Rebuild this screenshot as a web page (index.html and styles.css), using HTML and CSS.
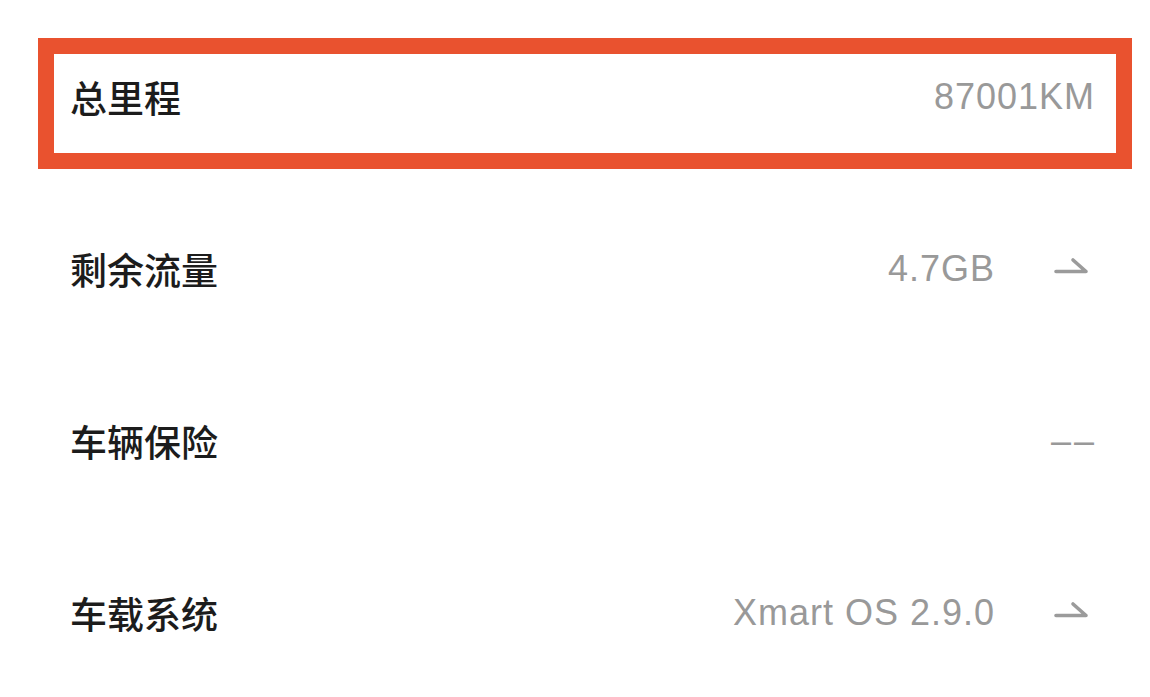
FILE: index.html
```html
<!DOCTYPE html>
<html lang="zh-CN">
<head>
<meta charset="utf-8">
<title>车辆信息</title>
<link rel="stylesheet" href="styles.css">
</head>
<body>
<div class="list">
  <div class="row row-highlight">
    <span class="label">总里程</span>
    <span class="value">87001KM</span>
  </div>
  <div class="row">
    <span class="label">剩余流量</span>
    <span class="value">4.7GB</span>
    <svg class="arrow" width="40" height="24" viewBox="0 0 40 24"><path d="M2 14.5 H32 L19 3" fill="none" stroke="#9b9b9b" stroke-width="3.6" stroke-linecap="round" stroke-linejoin="round"/></svg>
  </div>
  <div class="row">
    <span class="label">车辆保险</span>
    <span class="value dash">––</span>
  </div>
  <div class="row">
    <span class="label">车载系统</span>
    <span class="value">Xmart OS 2.9.0</span>
    <svg class="arrow" width="40" height="24" viewBox="0 0 40 24"><path d="M2 14.5 H32 L19 3" fill="none" stroke="#9b9b9b" stroke-width="3.6" stroke-linecap="round" stroke-linejoin="round"/></svg>
  </div>
</div>
</body>
</html>
```
FILE: styles.css
```css
html, body {
  margin: 0;
  padding: 0;
  background: #ffffff;
}
body {
  width: 1150px;
  height: 697px;
  overflow: hidden;
  font-family: "Liberation Sans", "Noto Sans CJK SC", sans-serif;
}
.list {
  padding: 38px 18px 0 38px;
  display: flex;
  flex-direction: column;
}
.row {
  display: flex;
  align-items: center;
  height: 172px;
  padding: 0 38px 0 32px;
  box-sizing: border-box;
}
.row-highlight {
  height: 131px;
  border: 16px solid #e9522f;
  padding: 0 22px 14px 16px;
  margin-bottom: 14px;
}
.label {
  font-family: "Noto Sans CJK SC", sans-serif;
  font-size: 37px;
  font-weight: 500;
  color: #1c1c1c;
  flex: 1;
}
.value {
  font-family: "Liberation Sans", sans-serif;
  font-size: 36px;
  color: #999999;
  letter-spacing: 1px;
  margin-right: -1px;
}
.dash {
  letter-spacing: 3px;
  margin-right: -3px;
}
.arrow {
  margin-left: 60px;
  display: block;
}
```
